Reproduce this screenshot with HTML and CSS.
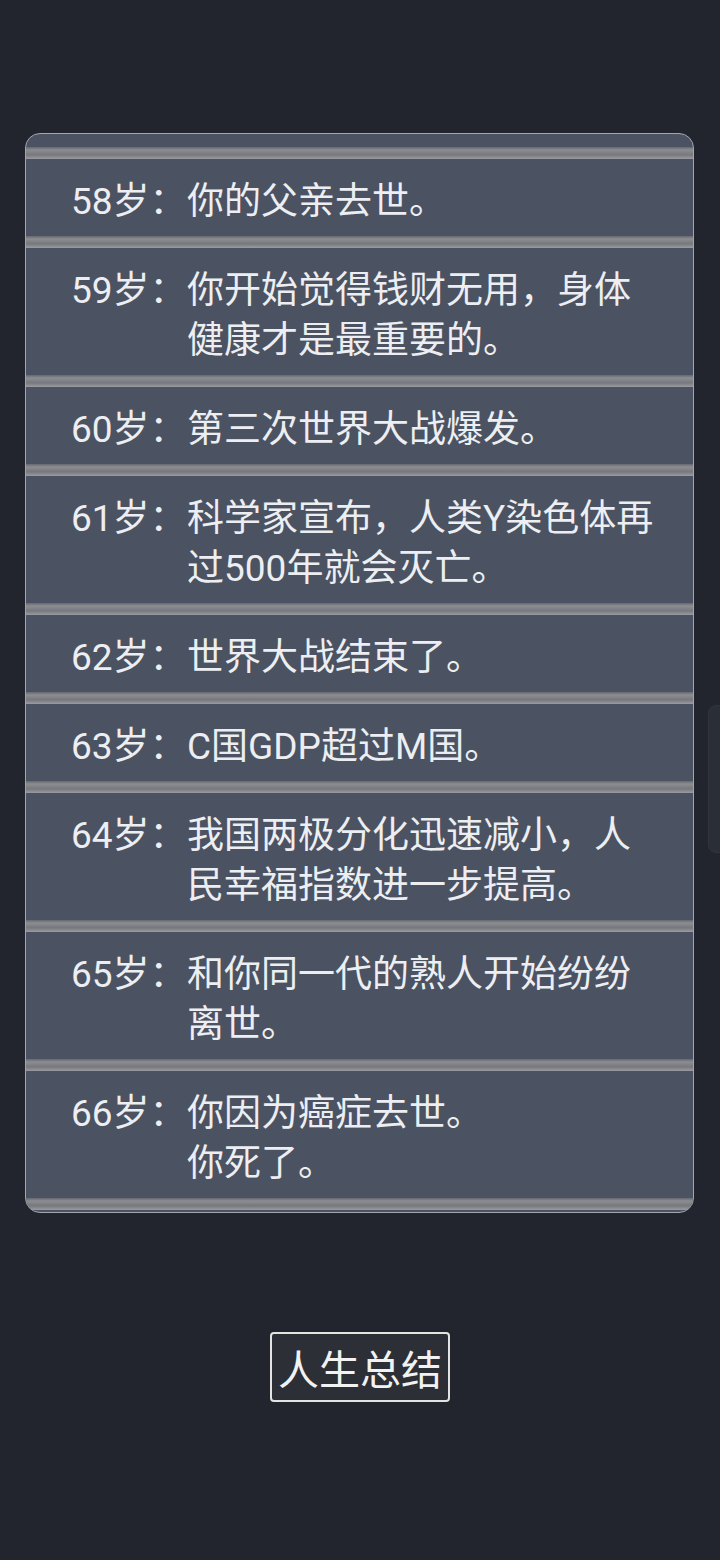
FILE: index.html
```html
<!DOCTYPE html>
<html lang="zh-CN">
<head>
  <meta charset="UTF-8" />
  <meta name="viewport" content="width=device-width, initial-scale=1.0" />
  <title>人生重开</title>
  <link rel="stylesheet" href="styles.css">
</head>
<body>
  <div class="page">
    <div class="log">
      <div class="bar"></div>
      <div class="row"><span class="age">58岁：</span><span class="text">你的父亲去世。</span></div>
      <div class="bar"></div>
      <div class="row"><span class="age">59岁：</span><span class="text">你开始觉得钱财无用，身体健康才是最重要的。</span></div>
      <div class="bar"></div>
      <div class="row"><span class="age">60岁：</span><span class="text">第三次世界大战爆发。</span></div>
      <div class="bar"></div>
      <div class="row"><span class="age">61岁：</span><span class="text">科学家宣布，人类Y染色体再过500年就会灭亡。</span></div>
      <div class="bar"></div>
      <div class="row"><span class="age">62岁：</span><span class="text">世界大战结束了。</span></div>
      <div class="bar"></div>
      <div class="row"><span class="age">63岁：</span><span class="text">C国GDP超过M国。</span></div>
      <div class="bar"></div>
      <div class="row"><span class="age">64岁：</span><span class="text">我国两极分化迅速减小，人民幸福指数进一步提高。</span></div>
      <div class="bar"></div>
      <div class="row"><span class="age">65岁：</span><span class="text">和你同一代的熟人开始纷纷离世。</span></div>
      <div class="bar"></div>
      <div class="row"><span class="age">66岁：</span><span class="text">你因为癌症去世。<br>你死了。</span></div>
      <div class="bar"></div>
    </div>

    <div class="actions">
      <button class="summary">人生总结</button>
    </div>
  </div>
  <div class="scroll-thumb"></div>
</body>
</html>
```

FILE: styles.css
```css
body {
  margin: 0;
  padding: 0;
  background: #22252d;
  font-family: Roboto, "Noto Sans CJK SC", sans-serif;
  color: #eceef2;
}
.page {
  padding: 133px 26px 0 25px;
}
.log {
  border: 1.5px solid #a2a6ad;
  border-radius: 15px;
  background: #4b5261;
  padding-top: 13px;
  padding-bottom: 2px;
  overflow: hidden;
}
.bar {
  height: 12px;
  background: linear-gradient(#666870, #8c8e92 25%, #76787d 65%, #9a9ca1);
}
.row {
  display: flex;
  padding: 18px 30px 9px 45px;
  font-size: 37px;
  line-height: 50px;
}
.age {
  flex: none;
  width: 116px;
  white-space: nowrap;
}
.text {
  flex: 1;
}
.actions {
  display: flex;
  justify-content: center;
  padding-top: 119px;
}
.summary {
  font-family: "Noto Sans CJK SC", sans-serif;
  font-size: 41px;
  line-height: 66px;
  color: #f2f2f2;
  background: #2c2f36;
  border: 2px solid #e4e4e4;
  border-radius: 4px;
  padding: 0 6px;
  margin-left: 1px;
}
.scroll-thumb {
  position: absolute;
  left: 708px;
  top: 705px;
  width: 20px;
  height: 146px;
  border-radius: 8px;
  background: #2a2e37;
  border: 1px solid #30343c;
}
```
